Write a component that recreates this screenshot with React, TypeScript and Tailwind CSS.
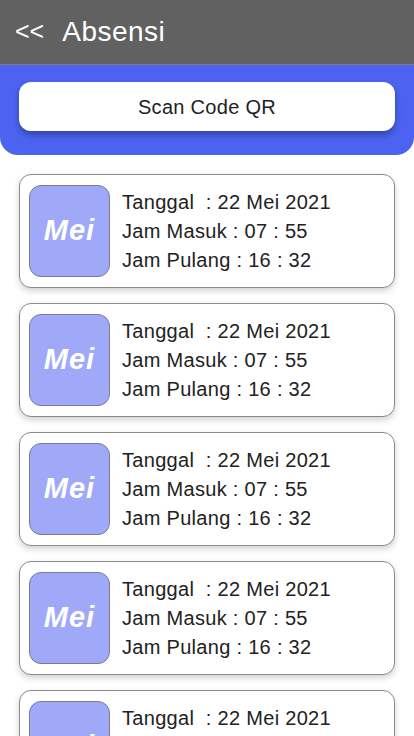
import React from 'react';

const font = { fontFamily: '"Liberation Sans", Arial, sans-serif' };

const items = [1, 2, 3, 4, 5];

function AbsenCard() {
  return (
    <div className="flex items-center gap-[12px] rounded-[12px] border border-[#8a8a8a] bg-white pl-[9px] pr-2 h-[114px] shadow-[0_3px_6px_rgba(0,0,0,0.18)]">
      <div className="flex h-[92px] w-[81px] shrink-0 items-center justify-center rounded-[12px] border border-[#7a7a9a] bg-[#a0a9f8]">
        <span className="text-[29px] font-bold italic tracking-[1px] text-white">Mei</span>
      </div>
      <div className="flex flex-col gap-[5px] text-[20px] leading-[24px] tracking-[0.3px] text-[#222]">
        <span>Tanggal&nbsp; : 22 Mei 2021</span>
        <span>Jam Masuk : 07 : 55</span>
        <span>Jam Pulang : 16 : 32</span>
      </div>
    </div>
  );
}

export default function App() {
  return (
    <div className="h-[736px] w-full overflow-hidden bg-white" style={font}>
      {/* Header */}
      <div className="flex h-[65px] items-center gap-[18px] border-b border-[#7d7d7d] bg-[#616161] px-[15px] text-white">
        <span className="text-[25px]">&lt;&lt;</span>
        <span className="text-[28px] tracking-[0.5px]">Absensi</span>
      </div>

      {/* Scan area */}
      <div className="rounded-b-[18px] bg-[#4b63f0] px-[19px] pt-[17px] pb-[24px]">
        <button className="flex h-[49px] w-full items-center justify-center rounded-[12px] bg-white text-[20px] tracking-[0.3px] text-[#222] shadow-[0_4px_6px_rgba(0,0,0,0.3)]">
          Scan Code QR
        </button>
      </div>

      {/* List */}
      <div className="flex flex-col gap-[15px] px-[19px] pt-[19px] pb-6">
        {items.map((i) => (
          <AbsenCard key={i} />
        ))}
      </div>
    </div>
  );
}
